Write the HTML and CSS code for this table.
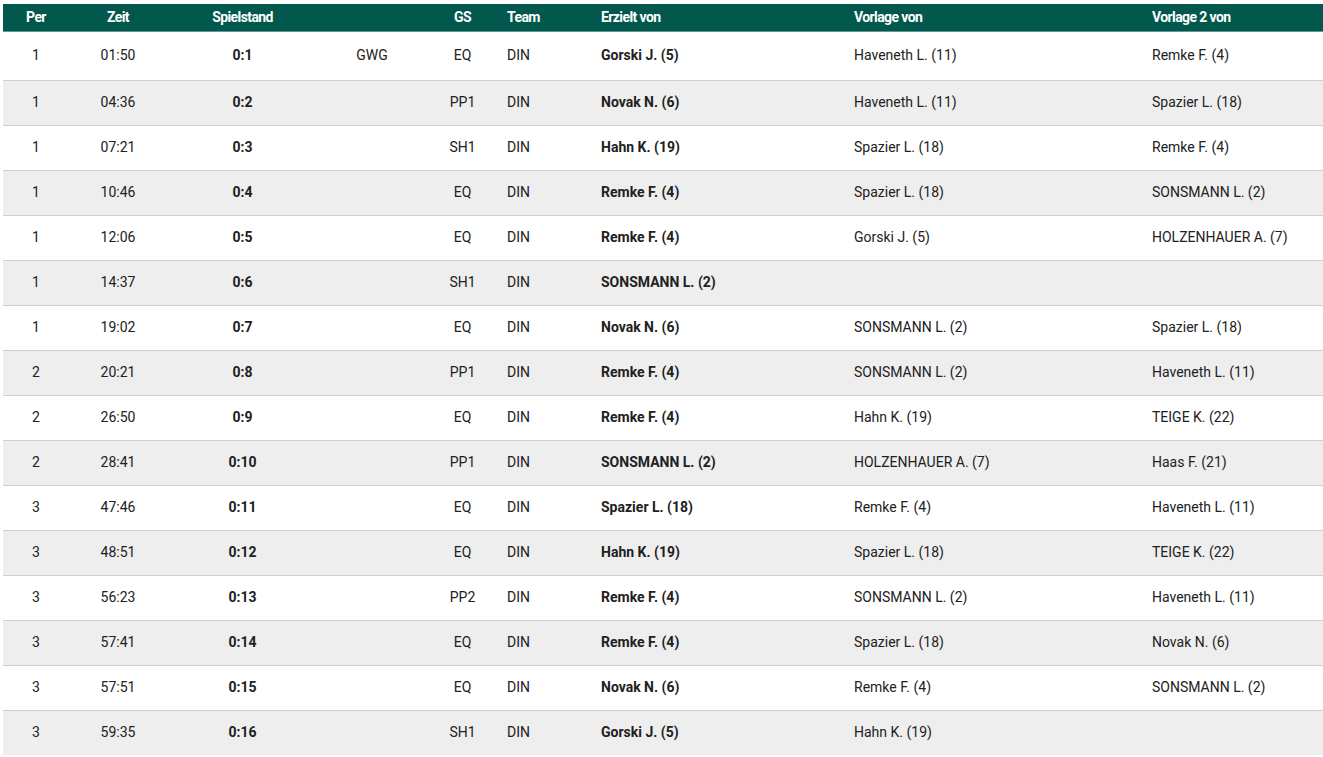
FILE: index.html
```html
<!DOCTYPE html>
<html lang="de">
<head>
<meta charset="utf-8">
<title>Tore</title>
<link rel="stylesheet" href="styles.css">
</head>
<body>
<table class="goals">
  <colgroup>
    <col class="c-per"><col class="c-zeit"><col class="c-score"><col class="c-info"><col class="c-gs"><col class="c-team"><col class="c-scorer"><col class="c-a1"><col class="c-a2">
  </colgroup>
  <thead>
    <tr>
      <th class="center">Per</th>
      <th class="center">Zeit</th>
      <th class="center">Spielstand</th>
      <th class="center"></th>
      <th class="center">GS</th>
      <th>Team</th>
      <th>Erzielt von</th>
      <th>Vorlage von</th>
      <th>Vorlage 2 von</th>
    </tr>
  </thead>
  <tbody>
    <tr class="first"><td class="center">1</td><td class="center">01:50</td><td class="center b">0:1</td><td class="center">GWG</td><td class="center">EQ</td><td>DIN</td><td class="b">Gorski J. (5)</td><td>Haveneth L. (11)</td><td>Remke F. (4)</td></tr>
    <tr><td class="center">1</td><td class="center">04:36</td><td class="center b">0:2</td><td class="center"></td><td class="center">PP1</td><td>DIN</td><td class="b">Novak N. (6)</td><td>Haveneth L. (11)</td><td>Spazier L. (18)</td></tr>
    <tr><td class="center">1</td><td class="center">07:21</td><td class="center b">0:3</td><td class="center"></td><td class="center">SH1</td><td>DIN</td><td class="b">Hahn K. (19)</td><td>Spazier L. (18)</td><td>Remke F. (4)</td></tr>
    <tr><td class="center">1</td><td class="center">10:46</td><td class="center b">0:4</td><td class="center"></td><td class="center">EQ</td><td>DIN</td><td class="b">Remke F. (4)</td><td>Spazier L. (18)</td><td>SONSMANN L. (2)</td></tr>
    <tr><td class="center">1</td><td class="center">12:06</td><td class="center b">0:5</td><td class="center"></td><td class="center">EQ</td><td>DIN</td><td class="b">Remke F. (4)</td><td>Gorski J. (5)</td><td>HOLZENHAUER A. (7)</td></tr>
    <tr><td class="center">1</td><td class="center">14:37</td><td class="center b">0:6</td><td class="center"></td><td class="center">SH1</td><td>DIN</td><td class="b">SONSMANN L. (2)</td><td></td><td></td></tr>
    <tr><td class="center">1</td><td class="center">19:02</td><td class="center b">0:7</td><td class="center"></td><td class="center">EQ</td><td>DIN</td><td class="b">Novak N. (6)</td><td>SONSMANN L. (2)</td><td>Spazier L. (18)</td></tr>
    <tr><td class="center">2</td><td class="center">20:21</td><td class="center b">0:8</td><td class="center"></td><td class="center">PP1</td><td>DIN</td><td class="b">Remke F. (4)</td><td>SONSMANN L. (2)</td><td>Haveneth L. (11)</td></tr>
    <tr><td class="center">2</td><td class="center">26:50</td><td class="center b">0:9</td><td class="center"></td><td class="center">EQ</td><td>DIN</td><td class="b">Remke F. (4)</td><td>Hahn K. (19)</td><td>TEIGE K. (22)</td></tr>
    <tr><td class="center">2</td><td class="center">28:41</td><td class="center b">0:10</td><td class="center"></td><td class="center">PP1</td><td>DIN</td><td class="b">SONSMANN L. (2)</td><td>HOLZENHAUER A. (7)</td><td>Haas F. (21)</td></tr>
    <tr><td class="center">3</td><td class="center">47:46</td><td class="center b">0:11</td><td class="center"></td><td class="center">EQ</td><td>DIN</td><td class="b">Spazier L. (18)</td><td>Remke F. (4)</td><td>Haveneth L. (11)</td></tr>
    <tr><td class="center">3</td><td class="center">48:51</td><td class="center b">0:12</td><td class="center"></td><td class="center">EQ</td><td>DIN</td><td class="b">Hahn K. (19)</td><td>Spazier L. (18)</td><td>TEIGE K. (22)</td></tr>
    <tr><td class="center">3</td><td class="center">56:23</td><td class="center b">0:13</td><td class="center"></td><td class="center">PP2</td><td>DIN</td><td class="b">Remke F. (4)</td><td>SONSMANN L. (2)</td><td>Haveneth L. (11)</td></tr>
    <tr><td class="center">3</td><td class="center">57:41</td><td class="center b">0:14</td><td class="center"></td><td class="center">EQ</td><td>DIN</td><td class="b">Remke F. (4)</td><td>Spazier L. (18)</td><td>Novak N. (6)</td></tr>
    <tr><td class="center">3</td><td class="center">57:51</td><td class="center b">0:15</td><td class="center"></td><td class="center">EQ</td><td>DIN</td><td class="b">Novak N. (6)</td><td>Remke F. (4)</td><td>SONSMANN L. (2)</td></tr>
    <tr class="last"><td class="center">3</td><td class="center">59:35</td><td class="center b">0:16</td><td class="center"></td><td class="center">SH1</td><td>DIN</td><td class="b">Gorski J. (5)</td><td>Hahn K. (19)</td><td></td></tr>
  </tbody>
</table>
</body>
</html>
```

FILE: styles.css
```css
html, body {
  margin: 0;
  padding: 0;
  background: #ffffff;
}

body {
  font-family: Roboto, "Liberation Sans", Arial, sans-serif;
  font-size: 14px;
  color: #212121;
  padding: 4px 0 0 3px;
}

.goals {
  width: 1320px;
  border-collapse: collapse;
  table-layout: fixed;
}

.c-per { width: 66px; }
.c-zeit { width: 98px; }
.c-score { width: 151px; }
.c-info { width: 108px; }
.c-gs { width: 73px; }
.c-team { width: 94px; }
.c-scorer { width: 253px; }
.c-a1 { width: 298px; }
.c-a2 { width: 179px; }

.goals th {
  background: #02584c;
  color: #ffffff;
  font-weight: 700;
  letter-spacing: -0.6px;
  height: 25px;
  padding: 0 8px 2px;
  text-align: left;
  border-bottom: 1px solid #5f9a90;
  vertical-align: middle;
  white-space: nowrap;
}

.goals td {
  height: 42px;
  padding: 0 8px 2px;
  text-align: left;
  border-bottom: 1px solid #cfcfcf;
  vertical-align: middle;
  white-space: nowrap;
}

.goals tbody tr:nth-child(even) td {
  background: #eeeeee;
}

.goals tr.first td {
  height: 46px;
}

.goals tr.last td {
  border-bottom: none;
}

.goals .center {
  text-align: center;
}

.goals .b {
  font-weight: 700;
}
```
